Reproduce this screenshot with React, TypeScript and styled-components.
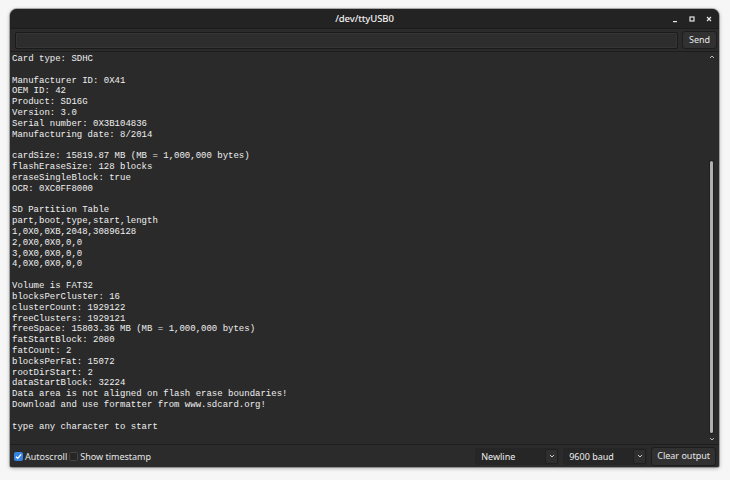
import React from "react";
import styled, { createGlobalStyle } from "styled-components";

const Global = createGlobalStyle`
  html, body { margin: 0; padding: 0; background: #f6f6f6; }
  #root { width: 730px; height: 480px; }
`;

const UI_FONT = `"Noto Sans", "Open Sans", sans-serif`;

const Page = styled.div`
  width: 730px;
  height: 480px;
  padding: 9px 11px 13px 10px;
  box-sizing: border-box;
  display: flex;
`;

const Window = styled.div`
  flex: 1;
  display: flex;
  flex-direction: column;
  background: #2b2b2b;
  border-radius: 7px 7px 2px 2px;
  overflow: hidden;
  box-shadow: 0 1px 4px rgba(0, 0, 0, 0.35), 0 0 0 1px rgba(0, 0, 0, 0.25);
  font-family: ${UI_FONT};
  color: #e6e6e6;
`;

const TitleBar = styled.div`
  height: 19px;
  flex: none;
  background: #232323;
  display: grid;
  grid-template-columns: 1fr auto 1fr;
  align-items: center;
`;

const Title = styled.div`
  font-size: 9.5px;
  font-weight: 500;
  color: #f2f2f2;
  letter-spacing: -0.1px;
`;

const Controls = styled.div`
  justify-self: end;
  display: flex;
  align-items: center;
  gap: 9px;
  padding-right: 6px;
`;

const Ctl = styled.svg`
  width: 8px;
  height: 8px;
  display: block;
`;

const InputRow = styled.div`
  flex: none;
  display: flex;
  align-items: center;
  gap: 4px;
  padding: 2px 2px 2px 5px;
  border-top: 1px solid #1c1c1c;
  border-bottom: 1px solid #1c1c1c;
  background: #2b2b2b;
`;

const TextInput = styled.div`
  flex: 1;
  height: 15px;
  background: #2d2d2d;
  border: 1px solid #1a1a1a;
  border-radius: 2px;
  box-shadow: inset 0 0 0 1px #353535;
`;

const Button = styled.button<{ $w?: number; $h?: number }>`
  height: ${(p) => p.$h ?? 19}px;
  ${(p) => (p.$w ? `width: ${p.$w}px;` : "")}
  padding: 0 5px;
  background: #313131;
  border: 1px solid #1d1d1d;
  border-radius: 3px;
  color: #e8e8e8;
  font-family: ${UI_FONT};
  font-size: 9px;
  line-height: 16px;
  cursor: default;
`;

const Body = styled.div`
  flex: 1;
  min-height: 0;
  display: flex;
  background: #2a2a2a;
`;

const Output = styled.pre`
  flex: 1;
  margin: 0;
  padding: 2px 0 0 2px;
  font-family: "Liberation Mono", "DejaVu Sans Mono", monospace;
  font-size: 9px;
  line-height: 10.82px;
  color: #efefef;
  white-space: pre;
  overflow: hidden;
`;

const ScrollCol = styled.div`
  width: 9px;
  flex: none;
  display: flex;
  flex-direction: column;
  align-items: center;
  padding: 3px 3px 3px 0;
`;

const Arrow = styled.svg`
  width: 6px;
  height: 4px;
  display: block;
  flex: none;
`;

const Track = styled.div`
  flex: 1;
  width: 3px;
  display: flex;
  flex-direction: column;
  padding: 4px 0;
`;

const Thumb = styled.div`
  margin-top: auto;
  height: 272px;
  width: 3px;
  border-radius: 2px;
  background: #b0b0b0;
  box-shadow: 0 0 0 1px #1e1e1e;
`;

const BottomBar = styled.div`
  flex: none;
  height: 22px;
  display: flex;
  align-items: center;
  padding: 0 3px 0 4px;
  border-top: 1px solid #1e1e1e;
  background: #2b2b2b;
  font-size: 9px;
`;

const Check = styled.span<{ $on?: boolean }>`
  width: 9px;
  height: 9px;
  border-radius: 1.5px;
  box-sizing: border-box;
  display: inline-flex;
  align-items: center;
  justify-content: center;
  background: ${(p) => (p.$on ? "#3584e4" : "#262626")};
  border: 1px solid ${(p) => (p.$on ? "#3584e4" : "#444")};
  margin-right: 2px;
`;

const Label = styled.span`
  color: #e6e6e6;
  margin-right: 2px;
`;

const Spacer = styled.div`
  flex: 1;
`;

const Select = styled.div<{ $w: number }>`
  width: ${(p) => p.$w}px;
  height: 17px;
  display: flex;
  align-items: center;
  margin-right: 4px;
  border-radius: 3px;
  background: #262626;
`;

const SelectText = styled.span`
  flex: 1;
  padding-left: 6px;
  font-size: 9px;
  color: #ededed;
`;

const SelectBtn = styled.span`
  width: 13px;
  height: 15px;
  margin-right: 1px;
  display: flex;
  align-items: center;
  justify-content: center;
  background: #2f2f2f;
  border-radius: 2px;
  border: 1px solid #202020;
  box-sizing: border-box;
`;

const lines = `Card type: SDHC

Manufacturer ID: 0X41
OEM ID: 42
Product: SD16G
Version: 3.0
Serial number: 0X3B104836
Manufacturing date: 8/2014

cardSize: 15819.87 MB (MB = 1,000,000 bytes)
flashEraseSize: 128 blocks
eraseSingleBlock: true
OCR: 0XC0FF8000

SD Partition Table
part,boot,type,start,length
1,0X0,0XB,2048,30896128
2,0X0,0X0,0,0
3,0X0,0X0,0,0
4,0X0,0X0,0,0

Volume is FAT32
blocksPerCluster: 16
clusterCount: 1929122
freeClusters: 1929121
freeSpace: 15803.36 MB (MB = 1,000,000 bytes)
fatStartBlock: 2080
fatCount: 2
blocksPerFat: 15072
rootDirStart: 2
dataStartBlock: 32224
Data area is not aligned on flash erase boundaries!
Download and use formatter from www.sdcard.org!

type any character to start`;

const Chevron = () => (
  <svg width="6" height="4" viewBox="0 0 6 4">
    <path d="M1 1 L3 3 L5 1" stroke="#cfcfcf" strokeWidth="1" fill="none" />
  </svg>
);

export default function App() {
  return (
    <>
      <Global />
      <Page>
        <Window>
          <TitleBar>
            <span />
            <Title>/dev/ttyUSB0</Title>
            <Controls>
              <Ctl viewBox="0 0 8 8">
                <rect x="2" y="6" width="4" height="1.2" fill="#e8e8e8" />
              </Ctl>
              <Ctl viewBox="0 0 8 8">
                <rect x="2" y="2" width="4" height="4" stroke="#e8e8e8" strokeWidth="1.2" fill="none" />
              </Ctl>
              <Ctl viewBox="0 0 8 8">
                <path d="M2 2 L6 6 M6 2 L2 6" stroke="#e8e8e8" strokeWidth="1.2" />
              </Ctl>
            </Controls>
          </TitleBar>
          <InputRow>
            <TextInput />
            <Button $w={35} $h={18}>Send</Button>
          </InputRow>
          <Body>
            <Output>{lines}</Output>
            <ScrollCol>
              <Arrow viewBox="0 0 6 4">
                <path d="M1 3 L3 1 L5 3" stroke="#bdbdbd" strokeWidth="1" fill="none" />
              </Arrow>
              <Track>
                <Thumb />
              </Track>
              <Arrow viewBox="0 0 6 4">
                <path d="M1 1 L3 3 L5 1" stroke="#bdbdbd" strokeWidth="1" fill="none" />
              </Arrow>
            </ScrollCol>
          </Body>
          <BottomBar>
            <Check $on>
              <svg width="7" height="7" viewBox="0 0 6 6">
                <path d="M0.8 3.2 L2.4 4.6 L5.2 1.2" stroke="#fff" strokeWidth="1.2" fill="none" />
              </svg>
            </Check>
            <Label>Autoscroll</Label>
            <Check />
            <Label>Show timestamp</Label>
            <Spacer />
            <Select $w={84}>
              <SelectText>Newline</SelectText>
              <SelectBtn>
                <Chevron />
              </SelectBtn>
            </Select>
            <Select $w={84}>
              <SelectText>9600 baud</SelectText>
              <SelectBtn>
                <Chevron />
              </SelectBtn>
            </Select>
            <Button>Clear output</Button>
          </BottomBar>
        </Window>
      </Page>
    </>
  );
}
